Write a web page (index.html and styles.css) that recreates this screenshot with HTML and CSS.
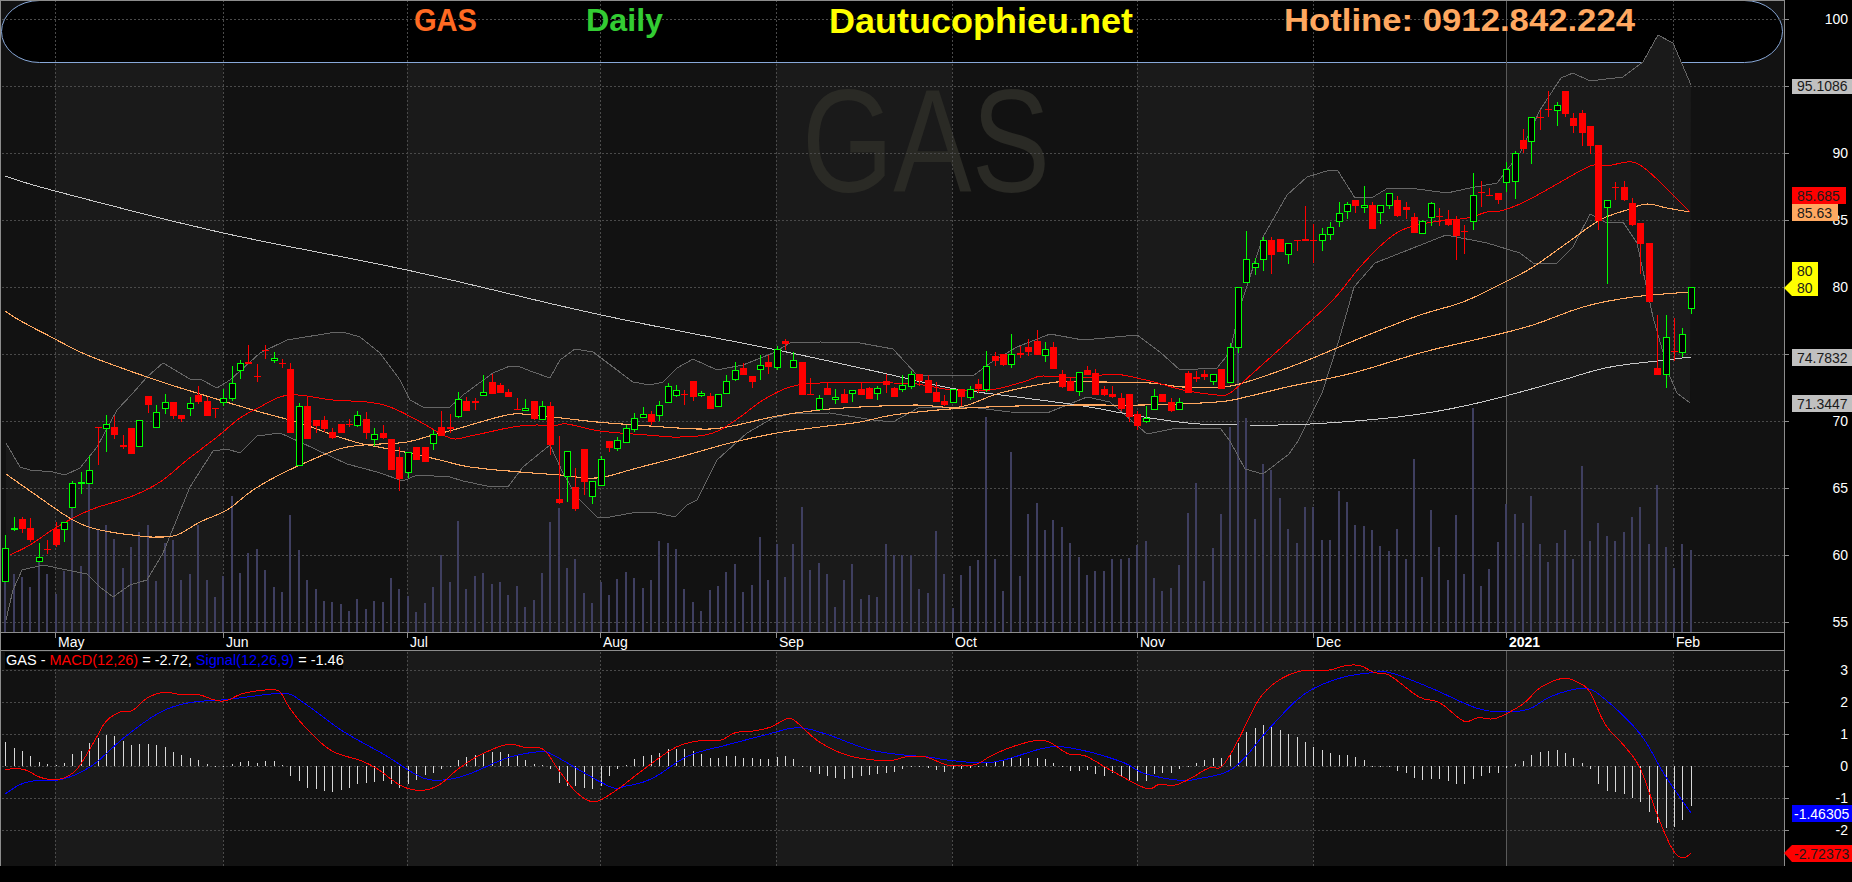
FILE: index.html
```html
<!DOCTYPE html>
<html lang="en">
<head>
    <meta charset="UTF-8">
    <title>GAS Daily - Dautucophieu.net</title>
    <link rel="stylesheet" href="styles.css">
</head>
<body>
    <div class="chart">
        <svg class="plot" id="plot" width="1852" height="882" viewBox="0 0 1852 882">
            <g id="bands"></g>
            <rect class="banner" x="1.5" y="0.5" width="1781" height="62" rx="38" ry="31"></rect>
            <text class="watermark" x="802" y="192" textLength="248" lengthAdjust="spacingAndGlyphs">GAS</text>
            <polygon class="bb-fill" id="bbFill"></polygon>
            <g id="grid"></g>
            <text class="title title-gas" x="414" y="31" textLength="63" lengthAdjust="spacingAndGlyphs">GAS</text>
            <text class="title title-daily" x="586" y="31" textLength="77" lengthAdjust="spacingAndGlyphs">Daily</text>
            <text class="title title-site" x="829" y="33" textLength="304" lengthAdjust="spacingAndGlyphs">Dautucophieu.net</text>
            <text class="title title-hotline" x="1284" y="31" textLength="351" lengthAdjust="spacingAndGlyphs">Hotline: 0912.842.224</text>
            <g id="volume"></g>
            <g id="lines"></g>
            <g id="candles"></g>
            <g id="macd"></g>

            <rect class="strip" x="1" y="633" width="1783" height="17"></rect>
            <rect class="strip" x="0" y="866" width="1852" height="16"></rect>
            <rect class="strip" x="1785" y="0" width="67" height="882"></rect>
            <g id="frame"></g>

            <g class="dates">
                <text x="58" y="647">May</text>
                <text x="226" y="647">Jun</text>
                <text x="410" y="647">Jul</text>
                <text x="603" y="647">Aug</text>
                <text x="779" y="647">Sep</text>
                <text x="955" y="647">Oct</text>
                <text x="1140" y="647">Nov</text>
                <text x="1316" y="647">Dec</text>
                <text class="year" x="1509" y="647">2021</text>
                <text x="1676" y="647">Feb</text>
            </g>

            <rect class="strip" x="5" y="652" width="338" height="17"></rect>
            <text class="legend" x="6" y="665">GAS - <tspan class="red">MACD(12,26)</tspan> = -2.72, <tspan class="blue">Signal(12,26,9)</tspan> = -1.46</text>

            <g class="axis">
                <text x="1848" y="24">100</text>
                <text x="1848" y="158">90</text>
                <text x="1848" y="225">85</text>
                <text x="1848" y="292">80</text>
                <text x="1848" y="359">75</text>
                <text x="1848" y="426">70</text>
                <text x="1848" y="493">65</text>
                <text x="1848" y="560">60</text>
                <text x="1848" y="627">55</text>
                <text x="1848" y="675">3</text>
                <text x="1848" y="707">2</text>
                <text x="1848" y="739">1</text>
                <text x="1848" y="771">0</text>
                <text x="1848" y="803">-1</text>
                <text x="1848" y="835">-2</text>
            </g>

            <g class="tags">
                <rect class="tag-grey" x="1792" y="79" width="60" height="15"></rect>
                <text x="1797" y="91">95.1086</text>
                <rect class="tag-red" x="1792" y="187" width="54" height="17"></rect>
                <text x="1797" y="201">85.685</text>
                <rect class="tag-orange" x="1792" y="204" width="46" height="17"></rect>
                <text x="1797" y="218">85.63</text>
                <polygon class="tag-yellow" points="1792,262 1818,262 1818,296 1792,296 1784,288 1792,280"></polygon>
                <text x="1797" y="276">80</text>
                <text x="1797" y="293">80</text>
                <rect class="tag-grey" x="1792" y="349" width="60" height="17"></rect>
                <text x="1797" y="363">74.7832</text>
                <rect class="tag-grey" x="1792" y="395" width="60" height="17"></rect>
                <text x="1797" y="409">71.3447</text>
                <rect class="tag-blue" x="1792" y="805" width="60" height="17"></rect>
                <text class="tag-light" x="1794" y="819">-1.46305</text>
                <polygon class="tag-red" points="1784,853 1792,845 1852,845 1852,862 1792,862"></polygon>
                <text x="1794" y="859">-2.72373</text>
            </g>
        </svg>
    </div>
    <script src="chart.js"></script>
</body>
</html>
```

FILE: styles.css
```css
body {
    margin: 0;
    background-color: #000;
    overflow: hidden;
}

.chart {
    width: 1852px;
    height: 882px;
}

.plot {
    display: block;
    font-family: "Liberation Sans", Arial, sans-serif;
    font-size: 14px;
}

.band-dark { fill: #121212; }
.band-light { fill: #1a1a1a; }

.banner {
    fill: #000;
    stroke: #88a8d8;
    stroke-width: 1;
}

.watermark {
    fill: #2a2a25;
    font-size: 146px;
}

.bb-fill { fill: #1a1a1a; }

.grid-line {
    stroke: #4a4a4a;
    stroke-width: 1;
    stroke-dasharray: 2 2;
    shape-rendering: crispEdges;
}

.year-line {
    stroke: #5a5a5a;
    stroke-width: 1;
    shape-rendering: crispEdges;
}

.title {
    font-size: 32px;
    font-weight: bold;
}

.title-gas { fill: #ff6a22; }
.title-daily { fill: #33cc33; }
.title-site { fill: #ffff00; font-size: 35px; }
.title-hotline { fill: #ffa860; }

.vol {
    fill: #3f3f60;
    shape-rendering: crispEdges;
}

.line {
    fill: none;
    shape-rendering: crispEdges;
}

.line-bb { stroke: #666; stroke-width: 1; }
.line-ma20 { stroke: #f00; stroke-width: 1; }
.line-ma { stroke: #ffa860; stroke-width: 1.1; }
.line-ma200 { stroke: #c8c8c8; stroke-width: 1; }
.line-macd { stroke: #f00; stroke-width: 1; }
.line-signal { stroke: #00f; stroke-width: 1; }

.wick-up { fill: #0f0; shape-rendering: crispEdges; }
.wick-down { fill: #f00; shape-rendering: crispEdges; }
.body-up {
    fill: #000;
    stroke: #0f0;
    stroke-width: 1;
    shape-rendering: crispEdges;
}
.body-down { fill: #f00; shape-rendering: crispEdges; }

.hist {
    fill: #d8d8d8;
    shape-rendering: crispEdges;
}

.frame-line {
    fill: #8c8c8c;
    shape-rendering: crispEdges;
}

.strip { fill: #000; }

.dates text { fill: #fff; }
.dates .year { font-weight: bold; }

.legend { fill: #fff; font-size: 14.5px; }
.legend .red { fill: #f00; }
.legend .blue { fill: #00f; }

.axis text {
    fill: #fff;
    text-anchor: end;
}

.tags text { fill: #1a1a1a; }
.tags .tag-light { fill: #fff; }
.tag-grey { fill: #c0c0c0; }
.tag-red { fill: #f00; }
.tag-orange { fill: #ffa860; }
.tag-yellow { fill: #ff0; }
.tag-blue { fill: #00f; }
```

FILE: chart.js
```js
const NS = 'http://www.w3.org/2000/svg';
const STEP = 8.385;
const barX = (i) => Math.round(5.3 + STEP * i);

const add = (parent, tag, attrs) => {
    const el = document.createElementNS(NS, tag);
    for (const key in attrs) el.setAttribute(key, attrs[key]);
    document.getElementById(parent).appendChild(el);
    return el;
};

const rect = (parent, cls, x, y, w, h) => add(parent, 'rect', { class: cls, x, y, width: w, height: h });

// month boundaries, every other month is shaded
const months = [55, 223, 407, 600, 776, 952, 1137, 1313, 1506, 1673];
const edges = [1, ...months, 1784];
for (let i = 0; i < edges.length - 1; i++) {
    rect('bands', i % 2 ? 'band-light' : 'band-dark', edges[i], 0, edges[i + 1] - edges[i], 866);
}

const priceGrid = [19, 86, 153, 220, 287, 354, 421, 488, 555, 622];
const macdGrid = [670, 702, 734, 766, 798, 830];
const hLine = (y) => add('grid', 'line', { class: 'grid-line', x1: 2, x2: 1784, y1: y + 0.5, y2: y + 0.5 });
priceGrid.forEach(hLine);
macdGrid.forEach(hLine);
months.forEach((x) => {
    const cls = x === 1506 ? 'year-line' : 'grid-line';
    add('grid', 'line', { class: cls, x1: x + 0.5, x2: x + 0.5, y1: 0, y2: 866 });
});

// volume bars: top y of each bar, oldest first
const volume = [
    577, 574, 577, 587, 562, 574, 594, 571, 507, 566, 483, 530, 525, 539, 568, 547, 532, 525, 581, 543,
    540, 580, 574, 525, 580, 597, 576, 496, 573, 553, 549, 570, 587, 592, 515, 550, 580, 589, 601, 602,
    604, 611, 599, 609, 601, 602, 578, 589, 596, 612, 603, 587, 555, 582, 521, 589, 576, 573, 584, 582,
    595, 586, 607, 600, 573, 522, 508, 568, 559, 593, 603, 582, 595, 579, 572, 578, 588, 580, 541, 543,
    549, 589, 602, 611, 590, 586, 572, 564, 592, 585, 537, 580, 544, 577, 544, 507, 570, 563, 574, 607,
    580, 564, 599, 595, 597, 544, 555, 555, 555, 589, 593, 531, 574, 608, 575, 566, 560, 417, 559, 591,
    452, 576, 514, 503, 530, 520, 527, 543, 557, 575, 571, 571, 559, 559, 558, 545, 541, 578, 591, 588,
    565, 513, 483, 581, 548, 514, 427, 347, 418, 519, 464, 470, 498, 529, 543, 507, 507, 540, 540, 491,
    502, 525, 526, 530, 546, 551, 529, 559, 459, 577, 510, 547, 580, 515, 574, 408, 586, 569, 542, 504,
    514, 523, 496, 544, 562, 543, 530, 559, 466, 541, 523, 536, 541, 532, 517, 507, 544, 485, 547, 568,
    544, 550
];
volume.forEach((y, i) => rect('volume', 'vol', barX(i) - 1, y, 2, 632 - y));

const polyline = (parent, cls, pts) => add(parent, 'polyline', {
    class: 'line ' + cls,
    points: pts.map((p) => p[0].toFixed(1) + ',' + p[1].toFixed(1)).join(' ')
});

// Catmull-Rom through the hand read points, the moving averages have no kinks
const smooth = (p) => {
    const out = [];
    for (let i = 0; i < p.length - 1; i++) {
        const a = p[Math.max(i - 1, 0)], b = p[i], c = p[i + 1], d = p[Math.min(i + 2, p.length - 1)];
        for (let s = 0; s < 4; s++) {
            const t = s / 4, t2 = t * t, t3 = t2 * t;
            const f = (k) => 0.5 * (2 * b[k] + (c[k] - a[k]) * t + (2 * a[k] - 5 * b[k] + 4 * c[k] - d[k]) * t2 + (3 * b[k] - a[k] - 3 * c[k] + d[k]) * t3);
            out.push([f(0), f(1)]);
        }
    }
    out.push(p[p.length - 1]);
    return out;
};

const bbUpper = [
    [6,443],[20,467],[30,470],[53,472],[65,475],[80,468],[97,447],[117,410],[133,393],[147,377],[163,363],[190,379],[200,379],[217,388],[230,380],[260,353],[287,340],[330,333],[343,332],[360,337],[380,353],[400,380],[410,400],[423,407],[450,407],[463,395],[493,373],[510,366],[520,367],[533,372],[550,378],[560,360],[575,349],[593,352],[617,370],[633,382],[650,385],[663,382],[677,368],[693,359],[717,370],[743,365],[773,353],[790,343],[820,342],[860,343],[893,349],[917,375],[973,376],[990,363],[1017,347],[1050,334],[1083,340],[1137,335],[1160,352],[1180,370],[1217,368],[1230,352],[1240,307],[1263,237],[1287,195],[1307,177],[1330,170],[1338,171],[1355,198],[1373,197],[1388,188],[1410,188],[1447,193],[1470,188],[1497,183],[1520,153],[1540,110],[1561,78],[1573,73],[1590,81],[1623,77],[1643,62],[1658,35],[1673,43],[1691,85]
];
const bbLower = [
    [6,620],[13,590],[22,570],[43,565],[67,570],[87,574],[100,587],[113,597],[130,585],[147,580],[163,553],[190,487],[213,451],[227,449],[240,453],[257,436],[280,433],[300,442],[347,464],[377,472],[403,481],[417,475],[450,477],[463,481],[487,486],[508,487],[523,467],[540,453],[550,445],[563,473],[577,497],[597,517],[610,517],[637,512],[653,512],[675,517],[687,505],[697,500],[717,460],[747,433],[773,418],[790,414],[830,413],[873,420],[893,422],[920,407],[970,407],[1010,412],[1047,413],[1087,397],[1110,402],[1147,434],[1177,428],[1220,428],[1230,441],[1245,469],[1263,474],[1289,454],[1298,441],[1322,393],[1339,340],[1354,287],[1375,263],[1446,235],[1487,243],[1520,253],[1533,263],[1557,263],[1573,247],[1590,214],[1607,223],[1623,222],[1637,243],[1653,317],[1670,377],[1677,393],[1690,403]
];
const ma20 = [
    [10,555],[30,545],[57,527],[90,510],[130,497],[160,482],[187,460],[217,437],[240,418],[260,407],[280,397],[298,395],[333,400],[367,402],[390,407],[417,420],[450,438],[470,436],[513,427],[537,425],[553,426],[567,424],[600,431],[647,435],[680,437],[713,433],[740,417],[763,400],[790,387],[820,383],[893,383],[917,384],[953,390],[990,390],[1023,382],[1043,376],[1083,378],[1113,374],[1150,381],[1183,390],[1217,395],[1230,393],[1253,373],[1293,337],[1333,300],[1360,267],[1387,240],[1407,228],[1433,222],[1467,218],[1487,212],[1500,211],[1520,204],[1543,192],[1590,166],[1607,166],[1627,162],[1640,165],[1660,182],[1690,212]
];
const ma50 = [
    [6,474],[33,493],[73,520],[100,530],[140,536],[157,537],[177,535],[200,522],[227,510],[253,490],[283,473],[323,455],[343,448],[363,445],[380,444],[407,442],[433,435],[453,430],[507,415],[533,415],[597,422],[637,425],[697,429],[727,427],[777,416],[820,410],[860,407],[917,405],[960,407],[1000,393],[1057,382],[1100,382],[1150,383],[1183,387],[1223,387],[1253,380],[1303,362],[1363,337],[1420,315],[1463,302],[1503,283],[1533,267],[1567,243],[1600,220],[1627,210],[1647,204],[1667,208],[1690,212]
];
const ma100 = [
    [5,311],[19,320],[55,339],[87,355],[147,377],[200,394],[253,410],[300,423],[333,435],[363,444],[400,451],[440,460],[470,467],[520,472],[560,475],[597,478],[637,468],[687,455],[730,443],[777,433],[820,427],[860,422],[893,415],[950,409],[1017,406],[1083,405],[1143,405],[1217,402],[1250,396],[1287,387],[1353,373],[1420,353],[1487,337],[1533,325],[1583,307],[1633,297],[1690,292]
];
const ma200 = [
    [5,176],[55,191],[223,233],[407,270],[601,315],[777,350],[883,373],[950,388],[1017,397],[1083,406],[1150,418],[1200,424],[1250,425],[1310,424],[1398,417],[1469,405],[1546,385],[1605,368],[1657,361],[1691,357]
];

document.getElementById('bbFill').setAttribute('points', [...bbUpper, ...bbLower.slice().reverse()].map((p) => p.join(',')).join(' '));
polyline('lines', 'line-bb', bbUpper);
polyline('lines', 'line-bb', bbLower);
polyline('lines', 'line-ma200', smooth(ma200));
polyline('lines', 'line-ma', smooth(ma100));
polyline('lines', 'line-ma', smooth(ma50));
polyline('lines', 'line-ma20', smooth(ma20));

// candles read off zoomed crops: crop top, then [high, body top, body bottom, low, up]
const candles = [
    [320, [
        [645,685,782,782,1],[591,624,628,632,1],[591,597,627,638,0],[595,624,659,665,0],[670,712,722,722,1],[660,686,690,702,0],[606,627,675,680,0],[605,607,628,665,1],[484,490,562,565,1],[457,487,490,522,1],
        [408,451,488,488,1],[322,322,324,435,0],[285,313,325,395,1],[288,321,345,357,0],[345,376,380,388,0],[324,324,402,402,0],[300,301,377,377,1],[228,228,255,279,0],[255,275,322,322,1],[222,245,265,282,1],
        [246,246,288,297,0],[284,285,298,305,0],[230,248,265,288,1],[198,225,245,252,0],[230,243,288,288,0],[265,265,268,294,0],[207,233,247,258,1],[138,190,233,242,1],[120,130,149,177,1],[75,126,131,131,0],
        [132,168,171,185,0],[75,89,92,117,0],[96,115,121,128,1],[117,129,132,145,0],[129,148,339,339,0],[250,259,434,434,1],[231,258,357,357,0],[300,300,318,339,0],[288,300,327,335,0],[325,336,354,357,0],
        [312,312,339,339,0],[297,312,316,322,0],[273,286,314,320,1],[277,297,339,357,0],[324,343,358,377,1],[316,339,354,357,0],[357,357,449,449,0],[381,411,477,513,0],[397,397,455,474,1],[381,381,419,419,0],
        [381,381,426,426,0],[331,343,368,390,1]
    ]],
    [320, [
        [273,322,347,347,0],[282,322,326,339,0],[216,238,287,293,1],[231,243,273,273,0],[234,243,248,270,0],[166,217,224,228,1],[163,187,221,221,0],[190,196,219,219,0],[208,216,231,231,0],[235,267,269,269,0],
        [237,265,269,269,1],[243,243,297,300,0],[243,259,296,296,1],[246,258,375,405,0],[348,537,549,552,0],[394,394,468,546,1],[445,502,567,573,0],[387,387,486,525,0],[484,484,527,552,1],[408,418,495,498,1],
        [363,363,384,396,0],[351,361,383,393,1],[315,325,366,369,1],[280,295,326,335,1],[262,283,292,292,1],[273,282,306,315,0],[243,256,284,303,1],[190,199,245,245,1],[195,211,224,231,1],[211,222,225,255,0],
        [183,183,231,243,0],[213,220,224,231,1],[220,228,267,267,0],[223,223,257,257,1],[166,184,218,218,1],[127,151,176,184,1],[130,145,165,165,0],[168,168,186,204,0],[105,136,146,180,1],[105,126,141,162,0],
        [78,88,140,150,1],[57,62,72,90,0],[97,121,140,140,1],[126,126,225,225,0],[174,222,225,225,0],[225,235,267,267,1],[188,205,225,225,0],[208,232,236,252,1],[207,222,249,249,0],[210,211,218,246,1]
    ]],
    [310, [
        [216,237,255,255,0],[232,235,267,267,0],[228,235,248,270,1],[192,213,225,249,0],[230,234,261,261,0],[195,225,236,246,1],[183,193,227,237,1],[192,192,213,228,0],[195,210,249,249,0],[216,246,276,276,0],
        [255,273,285,288,0],[237,237,275,275,1],[237,238,261,288,0],[227,236,260,270,1],[207,222,237,249,0],[123,169,236,246,1],[126,138,153,168,0],[132,132,165,168,0],[72,133,163,174,1],[108,130,134,144,0],
        [87,111,126,138,0],[60,93,135,135,0],[96,118,134,156,1],[96,111,177,177,0],[180,192,232,234,0],[201,213,243,243,0],[186,187,242,258,1],[168,180,196,196,0],[177,189,255,255,0],[228,237,255,258,0],
        [228,252,261,264,0],[249,264,298,304,0],[252,252,320,336,0],[303,312,348,360,0],[288,325,334,339,1],[237,259,298,298,1],[252,252,276,276,0],[264,276,303,306,0],[264,277,296,296,1],[183,189,249,249,0],
        [183,201,207,216,0],[180,192,202,210,0],[193,193,212,225,1],[177,177,237,237,0]
    ]],
    [80, [
        [790,802,905,905,1],[622,622,800,820,1],[453,538,607,607,1],[535,550,562,585,1],[470,481,538,573,1],[472,481,525,582,0],[477,477,516,516,0],[490,490,523,552,1],[481,481,484,514,0],[378,477,483,483,0],
        [432,481,484,549,0],[445,463,481,513,1],[426,442,463,480,1],[366,400,422,441,1],[366,371,394,417,1],[360,360,378,399,0],[318,376,382,399,1],[366,375,447,447,0],[376,376,397,432,1],[340,340,376,387,1],
        [348,360,408,411,0],[366,381,389,417,0],[399,411,459,459,0],[420,424,458,458,1],[366,370,412,438,1],[384,408,411,438,0],[390,417,435,438,0],[408,420,468,540,0],[435,453,456,522,0],[279,346,422,450,1],
        [303,336,339,381,0],[324,345,348,348,0],[339,339,360,372,0],[246,268,305,336,1],[213,220,302,357,1]
    ]],
    [60, [
        [207,240,267,279,0],[172,172,242,312,1],[150,172,175,210,0],[93,146,149,171,0],[126,136,149,198,1],[93,93,162,171,0],[159,174,197,219,0],[150,159,219,258,0],[198,198,258,282,0],[255,255,483,510,0],
        [421,421,442,672,1],[366,381,384,420,0],[363,381,420,423,0],[414,429,495,498,0],[489,489,552,642,0],[549,549,726,726,0],[765,925,945,945,0],[765,832,943,984,1],[775,873,876,903,0],[804,823,875,891,1],
        [682,682,743,762,1]
    ]]
];
let n = 0;
candles.forEach(([top, rows]) => {
    rows.forEach(([hi, open, close, lo, up]) => {
        const x = barX(n++);
        const y = (v) => Math.round(top + v / 3);
        const wick = up ? 'wick-up' : 'wick-down';
        rect('candles', wick, x, y(hi), 1, Math.max(y(lo) - y(hi), 1));
        if (up) {
            rect('candles', 'body-up', x - 2.5, y(open) + 0.5, 6, Math.max(y(close) - y(open), 1));
        } else {
            rect('candles', 'body-down', x - 3, y(open), 7, Math.max(y(close) - y(open), 1));
        }
    });
});

// macd histogram, bar ends as read off the crop (crop y, the zero line is at 976)
const hist = [
    903,920,930,945,963,970,973,965,940,930,905,890,882,885,900,912,910,908,912,918,933,942,950,957,968,974,976,970,963,960,965,960,960,972,
    1005,1020,1040,1045,1050,1053,1048,1042,1030,1027,1023,1020,1028,1040,1030,1018,1003,995,985,976,
    958,948,942,935,932,934,938,945,958,970,972,985,1025,1035,1035,1042,1043,1035,1005,985,973,955,945,942,935,925,925,925,930,938,950,950,945,945,950,952,955,955,948,945,955,
    976,992,1000,1005,1010,1013,1010,1005,1003,998,995,992,985,978,976,982,988,992,985,985,982,978,965,960,957,950,950,950,950,955,965,975,
    990,990,988,1000,1005,995,1005,1018,1020,1020,1000,995,995,985,975,965,958,950,952,940,905,872,860,852,858,866,878,888,903,918,928,937,942,942,948,957,975,975,975,
    990,997,1010,1016,1013,1013,1020,1030,1030,1013,1005,997,995,980,970,960,942,933,930,927,936,950,965,985,1030,1050,1052,1060,1072,1083,1113,1145,1160,1158,1137,1095
];
hist.forEach((v, i) => {
    const y = Math.round(441 + v / 3);
    rect('macd', 'hist', barX(i), Math.min(y, 766), 1, Math.max(Math.abs(y - 766), 1));
});

// macd lines in crop units: the left and right half crops are stretched 1.693x wide and 3x tall
const scale = (pts, left) => pts.map(([x, y]) => [left + x / 1.6933, 441 + y / 3]);
const macdLine = [
    ...scale([[8,985],[40,985],[70,1010],[100,1015],[130,985],[160,900],[180,840],[205,812],[225,808],[250,770],[280,754],[310,762],[335,760],[365,778],[385,778],[410,758],[445,748],[472,750],[490,800],[515,855],[550,915],[575,940],[610,958],[640,985],[680,1035],[715,1048],[745,1030],[775,985],[815,940],[860,910],[890,920],[920,925],[945,985],[975,1052],[1005,1082],[1040,1052],[1090,985],[1145,918],[1190,898],[1220,898],[1245,875],[1275,870],[1305,858],[1330,835],[1345,838],[1385,900],[1430,940],[1470,955],[1510,958],[1535,947]], 0),
    ...scale([[0,948],[35,972],[60,972],[85,970],[110,945],[150,915],[200,898],[240,938],[270,945],[310,985],[372,1042],[395,1030],[420,1033],[445,1015],[480,980],[500,978],[525,910],[550,820],[570,760],[600,715],[635,690],[680,688],[710,674],[735,674],[760,695],[785,703],[835,768],[870,785],[910,840],[935,830],[965,832],[1010,790],[1040,740],[1078,712],[1105,725],[1125,755],[1150,850],[1185,920],[1210,985],[1240,1130],[1265,1228],[1282,1250],[1295,1237]], 926)
];
const signalLine = [
    ...scale([[8,1060],[35,1030],[65,1018],[105,1015],[155,975],[210,890],[270,815],[320,785],[370,778],[410,770],[480,757],[510,780],[580,870],[650,940],[715,1010],[760,1015],[800,995],[860,950],[915,932],[940,945],[1030,1035],[1060,1035],[1105,1012],[1165,945],[1235,910],[1300,880],[1350,860],[1400,880],[1470,925],[1530,942]], 0),
    ...scale([[0,947],[40,958],[90,965],[130,958],[210,918],[270,930],[335,965],[370,998],[430,1018],[465,1012],[510,992],[540,950],[580,865],[640,760],[700,712],[755,695],[790,697],[860,745],[930,800],[975,812],[1020,805],[1060,765],[1115,742],[1150,775],[1210,880],[1250,1000],[1295,1115]], 926)
];
polyline('macd', 'line-signal', smooth(signalLine));
polyline('macd', 'line-macd', smooth(macdLine));

// frame, panel separators and axis ticks go last so nothing draws over them
rect('frame', 'frame-line', 0, 0, 1784, 1);
rect('frame', 'frame-line', 0, 0, 1, 866);
rect('frame', 'frame-line', 1784, 0, 1, 866);
rect('frame', 'frame-line', 0, 632, 1784, 1);
rect('frame', 'frame-line', 0, 650, 1784, 1);
[...priceGrid, ...macdGrid].forEach((y) => rect('frame', 'frame-line', 1784, y, 5, 1));
months.forEach((x) => rect('frame', 'frame-line', x, 633, 1, 5));
```
